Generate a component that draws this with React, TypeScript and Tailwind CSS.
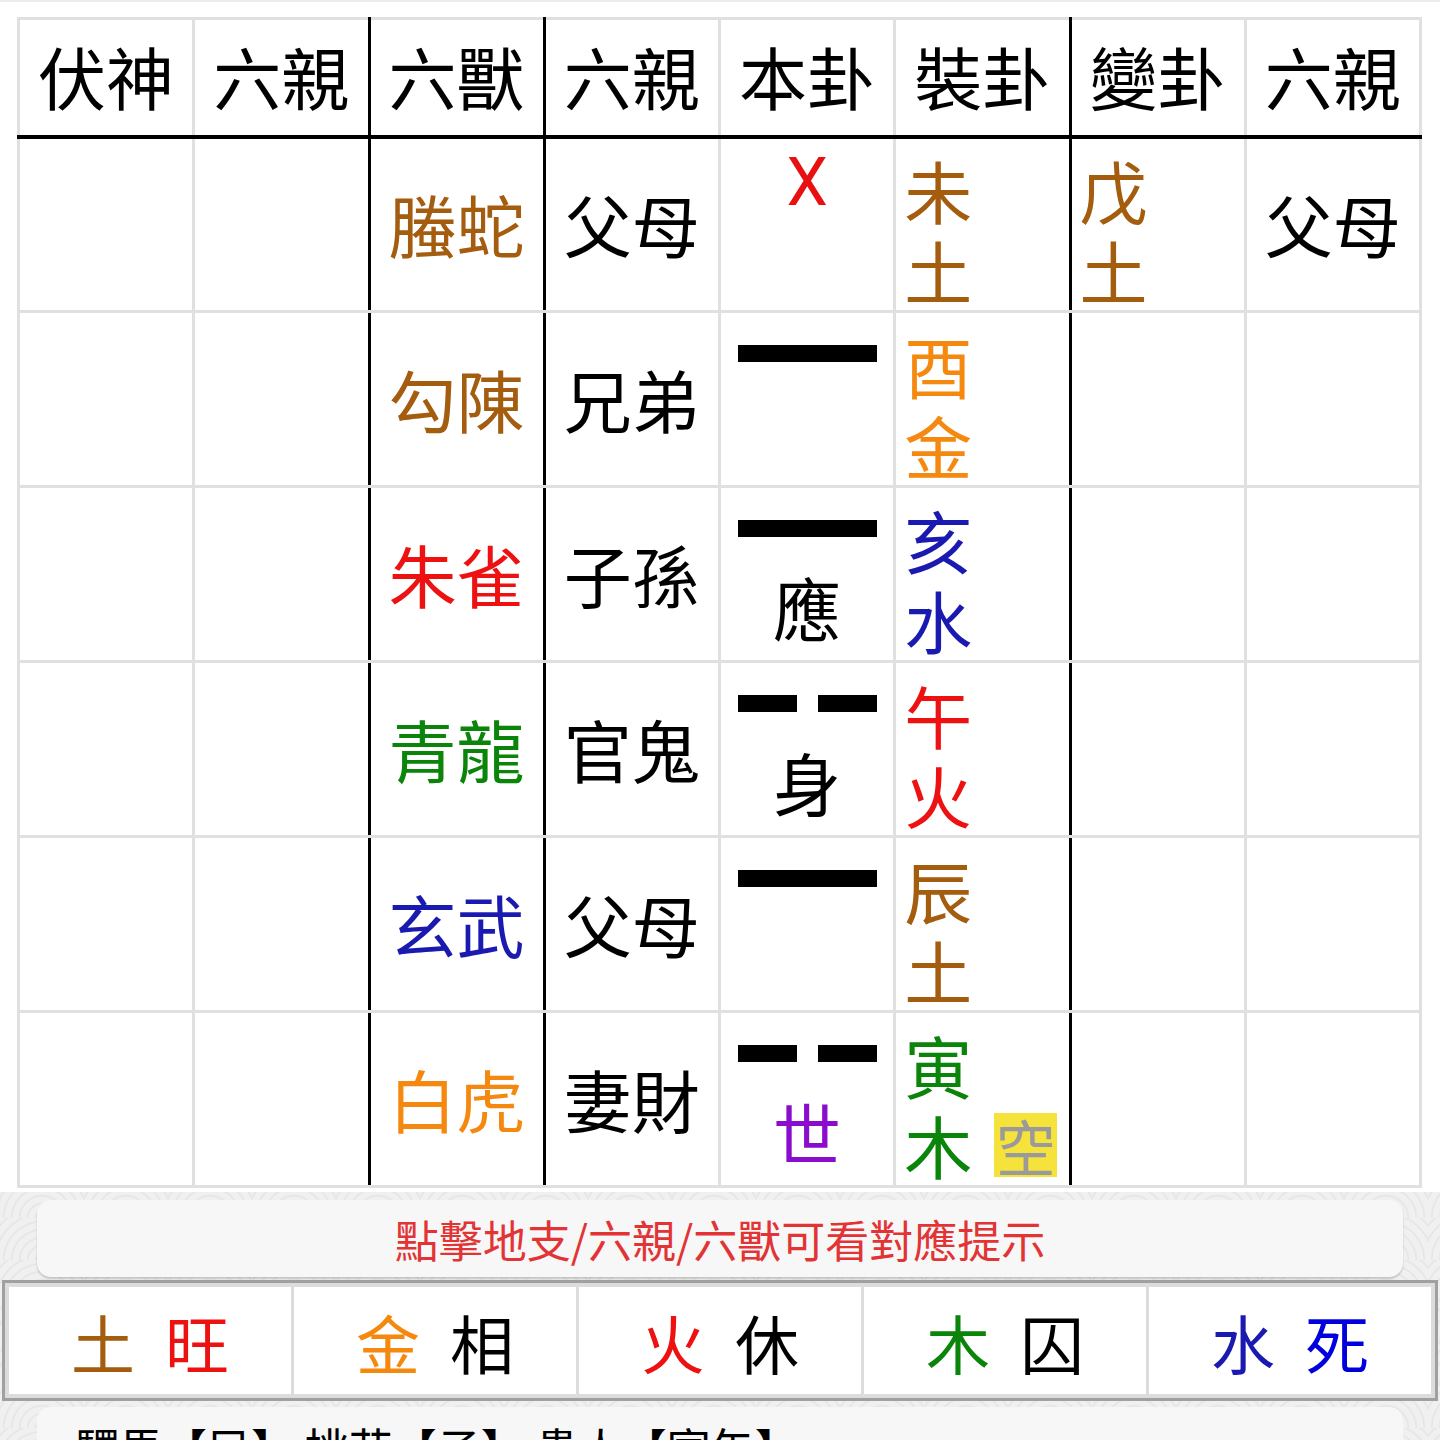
const headers = ['伏神', '六親', '六獸', '六親', '本卦', '裝卦', '變卦', '六親'];

// right/left edges that are drawn black in the chart
const colEdge = ['', 'border-r-black', 'border-x-black', 'border-l-black', '', 'border-r-black', 'border-l-black', ''];

type Yao = 'X' | 'yang' | 'yin';

const rows: {
  beast: string;
  beastColor: string;
  rel: string;
  yao: Yao;
  mark?: string;
  markColor?: string;
  zhi: string;
  wx: string;
  zhiColor: string;
  kong?: boolean;
  bian?: [string, string];
  bianColor?: string;
  bianRel?: string;
}[] = [
  { beast: '螣蛇', beastColor: 'text-[#a45c0e]', rel: '父母', yao: 'X', zhi: '未', wx: '土', zhiColor: 'text-[#a45c0e]', bian: ['戊', '土'], bianColor: 'text-[#a45c0e]', bianRel: '父母' },
  { beast: '勾陳', beastColor: 'text-[#a45c0e]', rel: '兄弟', yao: 'yang', zhi: '酉', wx: '金', zhiColor: 'text-[#f5890f]' },
  { beast: '朱雀', beastColor: 'text-[#ee1111]', rel: '子孫', yao: 'yang', mark: '應', markColor: 'text-black', zhi: '亥', wx: '水', zhiColor: 'text-[#1a1ab0]' },
  { beast: '青龍', beastColor: 'text-[#0a850a]', rel: '官鬼', yao: 'yin', mark: '身', markColor: 'text-black', zhi: '午', wx: '火', zhiColor: 'text-[#ee1111]' },
  { beast: '玄武', beastColor: 'text-[#1a1ab0]', rel: '父母', yao: 'yang', zhi: '辰', wx: '土', zhiColor: 'text-[#a45c0e]' },
  { beast: '白虎', beastColor: 'text-[#f5890f]', rel: '妻財', yao: 'yin', mark: '世', markColor: 'text-[#8a0ccc]', zhi: '寅', wx: '木', zhiColor: 'text-[#0a850a]', kong: true },
];

const seasons = [
  { el: '土', elColor: 'text-[#a45c0e]', st: '旺', stColor: 'text-[#ee1111]' },
  { el: '金', elColor: 'text-[#f5890f]', st: '相', stColor: 'text-black' },
  { el: '火', elColor: 'text-[#ee1111]', st: '休', stColor: 'text-black' },
  { el: '木', elColor: 'text-[#0a850a]', st: '囚', stColor: 'text-black' },
  { el: '水', elColor: 'text-[#1a1ab0]', st: '死', stColor: 'text-[#0000dd]' },
];

const cell = 'p-0 border-[3px] border-[#e0e0e0]';

function YaoMark({ yao }: { yao: Yao }) {
  if (yao === 'X') {
    return <span className="-mt-[21px] font-['Roboto',sans-serif] text-[66px] leading-none text-[#e81010]">X</span>;
  }
  if (yao === 'yang') {
    return <div className="h-[17px] w-[139px] bg-black" />;
  }
  return (
    <div className="flex gap-[21px]">
      <div className="h-[17px] w-[59px] bg-black" />
      <div className="h-[17px] w-[59px] bg-black" />
    </div>
  );
}

export default function App() {
  return (
    <div className="h-[1440px] w-[1440px] overflow-hidden bg-[#eeeeee] bg-[image:repeating-radial-gradient(circle_at_50%_100%,#f0f0f0_0px,#f0f0f0_5px,#e4e4e4_6px,#f0f0f0_8px)] bg-[length:84px_42px] font-['Noto_Sans_CJK_TC','Noto_Sans',sans-serif] text-black">
      <div className="border-t-2 border-[#ececec] bg-white pb-[4px] pl-[17px] pt-[15px]">
        <table className="w-[1405px] table-fixed border-collapse">
          <thead>
            <tr className="h-[118px]">
              {headers.map((h, i) => (
                <th
                  key={i}
                  className={`${cell} ${colEdge[i]} border-b-[4px] border-b-black pb-[2px] text-center align-middle text-[68px] font-normal leading-none`}
                >
                  {h}
                </th>
              ))}
            </tr>
          </thead>
          <tbody>
            {rows.map((r, ri) => (
              <tr key={ri} className="h-[175px]">
                <td className={`${cell} ${colEdge[0]}`} />
                <td className={`${cell} ${colEdge[1]}`} />
                <td className={`${cell} ${colEdge[2]} text-center align-middle text-[68px] leading-none ${r.beastColor}`}>
                  {r.beast}
                </td>
                <td className={`${cell} ${colEdge[3]} text-center align-middle text-[68px] leading-none`}>
                  {r.rel}
                </td>
                <td className={`${cell} ${colEdge[4]} align-top`}>
                  <div className="flex flex-col items-center pt-[32px]">
                    <YaoMark yao={r.yao} />
                    {r.mark && (
                      <span className={`mt-[36px] text-[68px] leading-none ${r.markColor}`}>{r.mark}</span>
                    )}
                  </div>
                </td>
                <td className={`${cell} ${colEdge[5]} pl-[8px] align-bottom`}>
                  <div className={`text-[68px] leading-[80px] ${r.zhiColor}`}>
                    <div>{r.zhi}</div>
                    <div>
                      {r.wx}
                      {r.kong && (
                        <span className="ml-[22px] inline-block h-[64px] w-[63px] bg-[#f5e23a] text-center align-[3px] text-[60px] leading-[64px] text-[#9a9a9a]">
                          空
                        </span>
                      )}
                    </div>
                  </div>
                </td>
                <td className={`${cell} ${colEdge[6]} pl-[8px] align-bottom`}>
                  {r.bian && (
                    <div className={`text-[68px] leading-[80px] ${r.bianColor}`}>
                      <div>{r.bian[0]}</div>
                      <div>{r.bian[1]}</div>
                    </div>
                  )}
                </td>
                <td className={`${cell} ${colEdge[7]} text-center align-middle text-[68px] leading-none`}>
                  {r.bianRel}
                </td>
              </tr>
            ))}
          </tbody>
        </table>
      </div>

      <div className="mx-[37px] mt-[8px] flex h-[77px] items-center justify-center rounded-[14px] bg-[#f7f7f7] text-[44px] leading-none text-[#e23434] shadow-[0_2px_2px_rgba(0,0,0,0.18)]">
        點擊地支/六親/六獸可看對應提示
      </div>

      <div className="mx-[2px] mt-[3px] flex h-[121px] gap-[3px] border-[3px] border-[#a0a0a0] bg-[#dcdcdc] p-[4px]">
        {seasons.map((s) => (
          <div key={s.el} className="flex flex-1 items-center justify-center gap-[30px] bg-white text-[64px] leading-none">
            <span className={s.elColor}>{s.el}</span>
            <span className={s.stColor}>{s.st}</span>
          </div>
        ))}
      </div>

      <div className="mx-[37px] mt-[6px] h-[100px] rounded-[14px] bg-[#f7f7f7] pl-[38px] pt-[18px] text-[44px] leading-none">
        驛馬【巳】 桃花【子】 貴人【寅午】
      </div>
    </div>
  );
}
